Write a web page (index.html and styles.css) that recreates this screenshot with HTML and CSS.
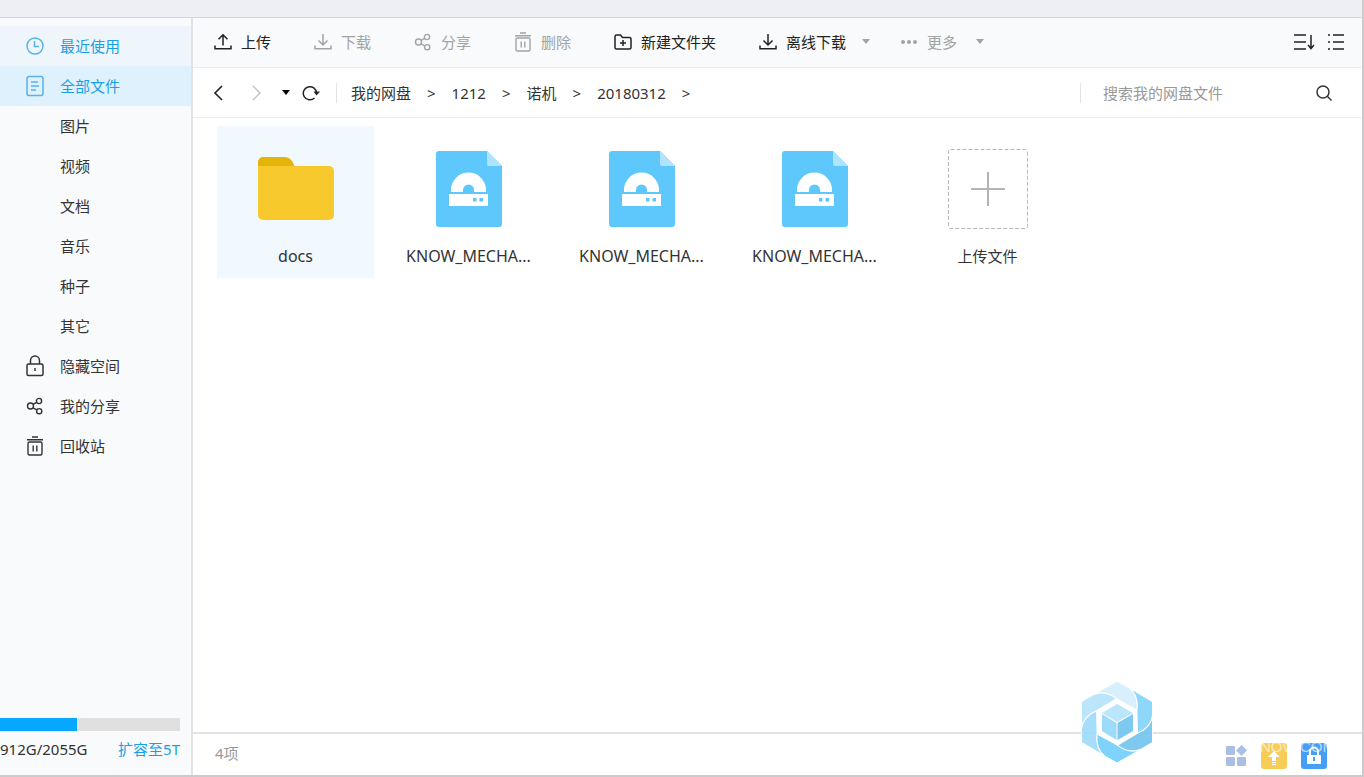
FILE: index.html
```html
<!DOCTYPE html>
<html lang="zh-CN">
<head>
<meta charset="utf-8">
<title>我的网盘</title>
<link rel="stylesheet" href="styles.css">
</head>
<body>
<svg class="defs" width="0" height="0" aria-hidden="true">
  <symbol id="share" viewBox="0 0 18 18"><g fill="none" stroke="currentColor" stroke-width="1.4"><circle cx="4.5" cy="9" r="3"/><circle cx="13" cy="4" r="2.6"/><circle cx="13.2" cy="14.2" r="2.6"/><path d="M7 7.4l3.7-2M7 10.8l3.8 2"/></g></symbol>
  <symbol id="trash" viewBox="0 0 18 20"><g fill="none" stroke="currentColor" stroke-width="1.4"><path d="M6 1h6M1 3.7h16"/><rect x="2" y="6" width="14" height="13" rx="1.5"/><path d="M7.2 9.5v6M10.8 9.5v6"/></g></symbol>
  <symbol id="down" viewBox="0 0 18 18"><path d="M1 12.5v3.3h16v-3.3M9 1v11M4.5 7.5L9 12l4.500-4.500" fill="none" stroke="currentColor" stroke-width="1.5"/></symbol>
  <symbol id="up" viewBox="0 0 18 18"><path d="M1 12.500v3.300h16v-3.300M9 12.500V2M4.500 6.200L9 1.700l4.500 4.500" fill="none" stroke="currentColor" stroke-width="1.5"/></symbol>
  <symbol id="caret" viewBox="0 0 8 5"><path d="M0 0h8L4 5z" fill="currentColor"/></symbol>
  <symbol id="disk" viewBox="0 0 66 76">
    <path d="M3 0h48l15 15v58a3 3 0 0 1-3 3H3a3 3 0 0 1-3-3V3a3 3 0 0 1 3-3z" fill="#5ec8fd"/>
    <path d="M51 0l15 15H53a2 2 0 0 1-2-2z" fill="#b0e4fe"/>
    <path d="M15 41v-2a17.500 17.500 0 0 1 35 0v2H38v-2a5.500 5.500 0 0 0-11 0v2z" fill="#fff"/>
    <path d="M13 43h39v12H13z" fill="#fff"/><path d="M37 47h3.500v3.500H37zM43.500 47H47v3.500h-3.500z" fill="#5ec8fd"/>
  </symbol>
</svg>
<div class="window">
  <header class="titlebar"></header>
  <div class="main">
    <aside class="sidebar">
      <nav class="menu">
        <a class="item recent" href="#"><svg class="icon" width="20" height="20" viewBox="0 0 20 20"><g fill="none" stroke="currentColor" stroke-width="1.500"><circle cx="10" cy="10" r="8"/><path d="M9.500 5v5.500H14"/></g></svg>最近使用</a>
        <a class="item active" href="#"><svg class="icon" width="20" height="22" viewBox="0 0 20 22"><g fill="none" stroke="currentColor" stroke-width="1.500"><rect x="2" y="1.500" width="16" height="19" rx="2"/><path d="M6 7h7M6 11h8M6 15h5"/></g></svg>全部文件</a>
        <a class="item" href="#">图片</a>
        <a class="item" href="#">视频</a>
        <a class="item" href="#">文档</a>
        <a class="item" href="#">音乐</a>
        <a class="item" href="#">种子</a>
        <a class="item" href="#">其它</a>
        <a class="item" href="#"><svg class="icon" width="20" height="22" viewBox="0 0 20 22"><g fill="none" stroke="currentColor" stroke-width="1.500"><rect x="2" y="9" width="16" height="11.500" rx="1.500"/><path d="M5.500 9V5.500a4.500 4.500 0 0 1 9 0V9M10 13v3"/></g></svg>隐藏空间</a>
        <a class="item" href="#"><svg class="icon" width="20" height="18"><use href="#share"/></svg>我的分享</a>
        <a class="item" href="#"><svg class="icon" width="20" height="20"><use href="#trash"/></svg>回收站</a>
      </nav>
      <div class="storage">
        <div class="bar"><div class="fill" style="width:43%"></div></div>
        <div class="quota"><span>912G/2055G</span><a href="#">扩容至5T</a></div>
      </div>
    </aside>
    <main class="panel">
      <div class="toolbar">
        <div class="tools">
          <button type="button"><svg width="18" height="18"><use href="#up"/></svg>上传</button>
          <button type="button" disabled><svg width="18" height="18"><use href="#down"/></svg>下载</button>
          <button type="button" disabled><svg width="18" height="18"><use href="#share"/></svg>分享</button>
          <button type="button" disabled><svg width="18" height="20"><use href="#trash"/></svg>删除</button>
          <button type="button"><svg width="18" height="18" viewBox="0 0 18 18"><path d="M2.500 2h4l2 2.500h7A1.500 1.500 0 0 1 17 6v8.500a1.500 1.500 0 0 1-1.500 1.500h-13A1.500 1.500 0 0 1 1 14.500v-11A1.500 1.500 0 0 1 2.500 2zM9 7v6M6 10h6" fill="none" stroke="currentColor" stroke-width="1.500"/></svg>新建文件夹</button>
          <button type="button"><svg width="18" height="18"><use href="#down"/></svg>离线下载<svg class="caret" width="8" height="5"><use href="#caret"/></svg></button>
          <button class="more" type="button" disabled><svg width="18" height="18" viewBox="0 0 18 18" fill="currentColor"><circle cx="3" cy="9" r="2"/><circle cx="9" cy="9" r="2"/><circle cx="15" cy="9" r="2"/></svg>更多<svg class="caret" width="8" height="5"><use href="#caret"/></svg></button>
        </div>
        <div class="views">
          <button type="button" aria-label="排序"><svg width="22" height="18" viewBox="0 0 22 18"><path d="M1 2h12M1 9h12M1 16h12M18 2v13M15 12l3 3.500 3-3.500" fill="none" stroke="currentColor" stroke-width="1.500"/></svg></button>
          <button type="button" aria-label="列表"><svg width="18" height="18" viewBox="0 0 18 18"><path d="M1 2h2M6 2h11M1 9h2M6 9h11M1 16h2M6 16h11" fill="none" stroke="currentColor" stroke-width="1.500"/></svg></button>
        </div>
      </div>
      <div class="pathbar">
        <div class="history">
          <button type="button" aria-label="后退"><svg width="10" height="16" viewBox="0 0 10 16"><path d="M9 1L2 8l7 7" fill="none" stroke="currentColor" stroke-width="1.600"/></svg></button>
          <button type="button" aria-label="前进" disabled><svg width="10" height="16" viewBox="0 0 10 16"><path d="M1 1l7 7-7 7" fill="none" stroke="currentColor" stroke-width="1.500"/></svg></button>
          <button class="recall" type="button" aria-label="历史"><svg width="8" height="5"><use href="#caret"/></svg></button>
          <button class="reload" type="button" aria-label="刷新"><svg width="18" height="16" viewBox="0 0 18 16"><path d="M12.500 13A6.600 6.600 0 1 1 14.500 8" fill="none" stroke="currentColor" stroke-width="1.500"/><path d="M11.500 6.500H18L14.500 10.500z" fill="currentColor"/></svg></button>
        </div>
        <nav class="crumbs"><a href="#">我的网盘</a><span>&gt;</span><a href="#">1212</a><span>&gt;</span><a href="#">诺机</a><span>&gt;</span><a href="#">20180312</a><span>&gt;</span></nav>
        <form class="search">
          <input type="text" placeholder="搜索我的网盘文件" aria-label="搜索我的网盘文件">
          <button type="button" aria-label="搜索"><svg width="18" height="18" viewBox="0 0 18 18"><g fill="none" stroke="currentColor" stroke-width="1.500"><circle cx="8" cy="8" r="6"/><path d="M12.300 12.300L16.500 16.500"/></g></svg></button>
        </form>
      </div>
      <div class="files">
        <button class="file selected" type="button"><span class="thumb"><svg width="76" height="64" viewBox="0 0 76 64"><path d="M0 14V5a5 5 0 0 1 5-5h22c5 0 8 4 10 11v5H0z" fill="#e4b40b"/><path d="M0 9h71a5 5 0 0 1 5 5v44a5 5 0 0 1-5 5H5a5 5 0 0 1-5-5z" fill="#f7c92c"/></svg></span><span class="name">docs</span></button>
        <button class="file" type="button"><span class="thumb"><svg width="66" height="76"><use href="#disk"/></svg></span><span class="name">KNOW_MECHA...</span></button>
        <button class="file" type="button"><span class="thumb"><svg width="66" height="76"><use href="#disk"/></svg></span><span class="name">KNOW_MECHA...</span></button>
        <button class="file" type="button"><span class="thumb"><svg width="66" height="76"><use href="#disk"/></svg></span><span class="name">KNOW_MECHA...</span></button>
        <button class="file" type="button"><span class="thumb"><svg width="82" height="82" viewBox="0 0 82 82" fill="none"><rect x="1.500" y="1.500" width="79" height="79" rx="2" stroke="#b9b9b9" stroke-dasharray="4 2"/><path d="M41 24v34M24 41h34" stroke="#b4b4b4" stroke-width="2"/></svg></span><span>上传文件</span></button>
      </div>
      <footer class="status">
        <span>4项</span>
        <div class="apps">
          <button type="button" aria-label="应用"><svg width="22" height="22" viewBox="0 0 22 22" fill="#a9c0e4"><rect x="1" y="1" width="9" height="9" rx="1"/><path d="M16.500 0l5.500 5.500-5.500 5.500L11 5.500z"/><rect x="1" y="12" width="9" height="9" rx="1"/><rect x="12" y="12" width="9" height="9" rx="1"/></svg></button>
          <button type="button" aria-label="上传"><svg width="26" height="26" viewBox="0 0 26 26"><rect width="26" height="26" rx="3" fill="#f7cd58"/><path d="M13 8l6 6h-4v4h-4v-4H7zM11 19h4v1h-4zM11 21h4v1h-4z" fill="#fff"/></svg></button>
          <button type="button" aria-label="加密"><svg width="26" height="26" viewBox="0 0 26 26"><rect width="26" height="26" rx="3" fill="#469ff6"/><path d="M9 12V8.500a4 4 0 0 1 8 0V12" fill="none" stroke="#fff" stroke-width="2"/><rect x="6" y="12" width="14" height="9" fill="#fff"/><path d="M13 14v4" stroke="#469ff6" stroke-width="2"/></svg></button>
          <span class="site">KNOW.COM</span>
        </div>
      </footer>
      <svg class="mark" width="72" height="82" viewBox="0 0 72 82" aria-hidden="true">
        <defs><path id="blade" d="M56 29Q58 15 48 6.800L36 0 12.400 13.500Q24 8.500 36 18z"/></defs>
        <g stroke="#fff" stroke-width="1">
          <use href="#blade" fill="#d6effd"/>
          <use href="#blade" fill="#86d6fa" transform="rotate(60 36 41)"/>
          <use href="#blade" fill="#76c6f0" transform="rotate(120 36 41)"/>
          <use href="#blade" fill="#78d0fb" transform="rotate(180 36 41)"/>
          <use href="#blade" fill="#a0dbfa" transform="rotate(240 36 41)"/>
          <use href="#blade" fill="#b7e4fb" transform="rotate(300 36 41)"/>
        </g>
        <path d="M36 18l20 11.500v23L36 64 16 52.500v-23z" fill="#fff"/>
        <path d="M36 23l16 9-16 9-15-9z" fill="#b7e4fb"/><path d="M21 33l14.500 9v17L21 50z" fill="#98d9f9"/><path d="M52 33l-15.500 9v17L52 50z" fill="#76c6f0"/>
      </svg>
    </main>
  </div>
</div>
</body>
</html>
```
FILE: styles.css
```css
* { box-sizing: border-box; }

body {
  margin: 0;
  background: #f4f4f5;
  color: #333;
  font: 15px/20px "Noto Sans", "Noto Sans CJK SC", sans-serif;
}

button {
  display: flex;
  align-items: center;
  padding: 0;
  border: 0;
  background: none;
  color: inherit;
  font: inherit;
  white-space: nowrap;
}

a { color: inherit; text-decoration: none; }

svg { flex: none; }

.defs { position: absolute; }

.window {
  display: flex;
  flex-direction: column;
  height: 100vh;
  border-right: 2px solid #cbcbcd;
}

.titlebar {
  height: 18px;
  background: #edeff4;
  border-bottom: 1px solid #d3d5d9;
}

.main {
  display: flex;
  flex: 1;
  min-height: 0;
  border-bottom: 2px solid #cbcbcd;
}

.sidebar {
  display: flex;
  flex-direction: column;
  justify-content: space-between;
  width: 193px;
  padding-top: 8px;
  border-right: 2px solid #e0e3e7;
  background: #f8fafc;
}

.item {
  display: flex;
  align-items: center;
  height: 40px;
  padding-left: 60px;
}

.icon {
  width: 20px;
  margin-left: -35px;
  margin-right: 15px;
}

.recent { background: #eef6fc; color: #1a9fe6; }
.active { background: #dff1fd; color: #1a9fe6; }
.recent .icon, .active .icon { color: #58b3e6; }

.storage { padding: 0 11px 16px 0; }

.bar { height: 13px; background: #e0e0e0; }
.fill { height: 100%; background: #06a7ff; }

.quota {
  display: flex;
  justify-content: space-between;
  margin-top: 8px;
}

.quota a { color: #1a9fe6; }

.panel {
  position: relative;
  display: flex;
  flex: 1;
  flex-direction: column;
  min-width: 0;
  background: #fff;
}

.toolbar {
  display: flex;
  align-items: center;
  justify-content: space-between;
  height: 50px;
  padding: 0 17px 2px 21px;
  border-bottom: 1px solid #ebedef;
  background: #f8fafc;
}

.tools { display: flex; gap: 43px; }
.tools button { gap: 9px; color: #222; }
.tools button:disabled { color: #a3a3a3; }
.tools .caret { margin-left: 7px; color: #a3a3a3; }
.tools .more { margin-left: -13px; }
.tools .more .caret { margin-left: 10px; }

.views { display: flex; gap: 12px; color: #222; }

.pathbar {
  display: flex;
  align-items: center;
  height: 50px;
  padding: 0 29px 0 20px;
  border-bottom: 1px solid #ebedef;
}

.history {
  display: flex;
  align-items: center;
  height: 20px;
  padding-right: 16px;
  border-right: 1px solid #e4e4e4;
  color: #222;
}

.history button { margin-right: 29px; }
.history button:disabled { margin-right: 20px; color: #c4c4c4; }
.history .recall { margin-right: 12px; color: #000; }
.history .reload { margin-right: 0; }

.crumbs {
  display: flex;
  flex: 1;
  gap: 16px;
  padding-left: 14px;
}

.search {
  display: flex;
  align-items: center;
  width: 253px;
  height: 20px;
  padding-left: 22px;
  border-left: 1px solid #e4e4e4;
}

.search input {
  flex: 1;
  min-width: 0;
  padding: 0;
  border: 0;
  outline: 0;
  background: none;
  font: inherit;
}

.search input::placeholder { color: #999; }

.files {
  display: flex;
  flex: 1;
  flex-wrap: wrap;
  align-content: flex-start;
  gap: 16px;
  padding: 8px 24px;
}

.file {
  flex-direction: column;
  width: 157px;
  height: 152px;
  padding-top: 22px;
}

.selected { background: #f1f9fe; }

.thumb {
  display: flex;
  align-items: center;
  justify-content: center;
  height: 82px;
  margin-bottom: 16px;
}

.name { font-size: 16px; }

.status {
  display: flex;
  align-items: center;
  justify-content: space-between;
  height: 43px;
  padding: 0 35px 4px 22px;
  border-top: 2px solid #e2e2e2;
  color: #999;
}

.apps {
  position: relative;
  display: flex;
  align-items: center;
  gap: 14px;
  padding-top: 6px;
}

.site {
  position: absolute;
  right: -8px;
  top: 0;
  color: #fff;
  opacity: 0.6;
  font: 15px/20px "Liberation Sans", sans-serif;
}

.mark {
  position: absolute;
  right: 209px;
  bottom: 12px;
  opacity: 0.94;
}
```
